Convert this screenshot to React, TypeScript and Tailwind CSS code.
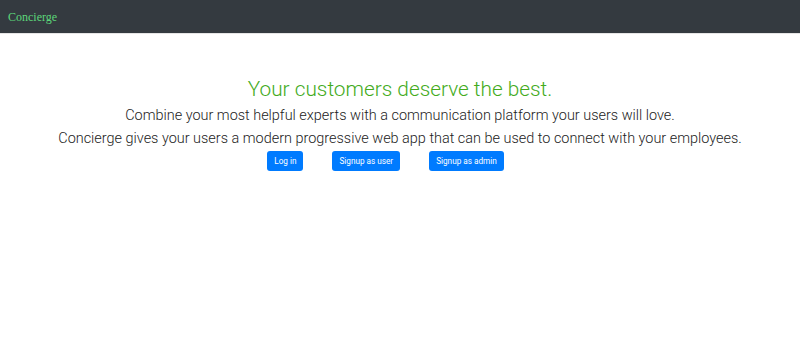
export default function App() {
  return (
    <div className="w-[800px] h-[352px] bg-white overflow-hidden">
      <nav className="h-[34px] bg-[#343a40] flex items-center px-2 border-b border-[#e5e5e5]">
        <span className="text-[12px] text-[#5cd67a] font-['Liberation_Serif','DejaVu_Serif',serif]">Concierge</span>
      </nav>
      <main className="flex flex-col items-center pt-[40px] font-['Roboto',sans-serif]">
        <h1 className="text-[20.8px] leading-[30px] font-light text-[#43ab1c]">Your customers deserve the best.</h1>
        <p className="text-[14.45px] leading-[23px] font-light text-[#222]">Combine your most helpful experts with a communication platform your users will love.</p>
        <p className="text-[14.45px] leading-[23px] font-light text-[#222]">Concierge gives your users a modern progressive web app that can be used to connect with your employees.</p>
        <div className="flex mt-[1px]">
          <button className="h-[20px] px-[7px] mr-[29px] rounded-[3px] bg-[#007bff] text-white text-[8.2px]">Log in</button>
          <button className="h-[20px] px-[7px] mr-[29px] rounded-[3px] bg-[#007bff] text-white text-[8.2px]">Signup as user</button>
          <button className="h-[20px] px-[7px] mr-[29px] rounded-[3px] bg-[#007bff] text-white text-[8.2px]">Signup as admin</button>
        </div>
      </main>
    </div>
  );
}
